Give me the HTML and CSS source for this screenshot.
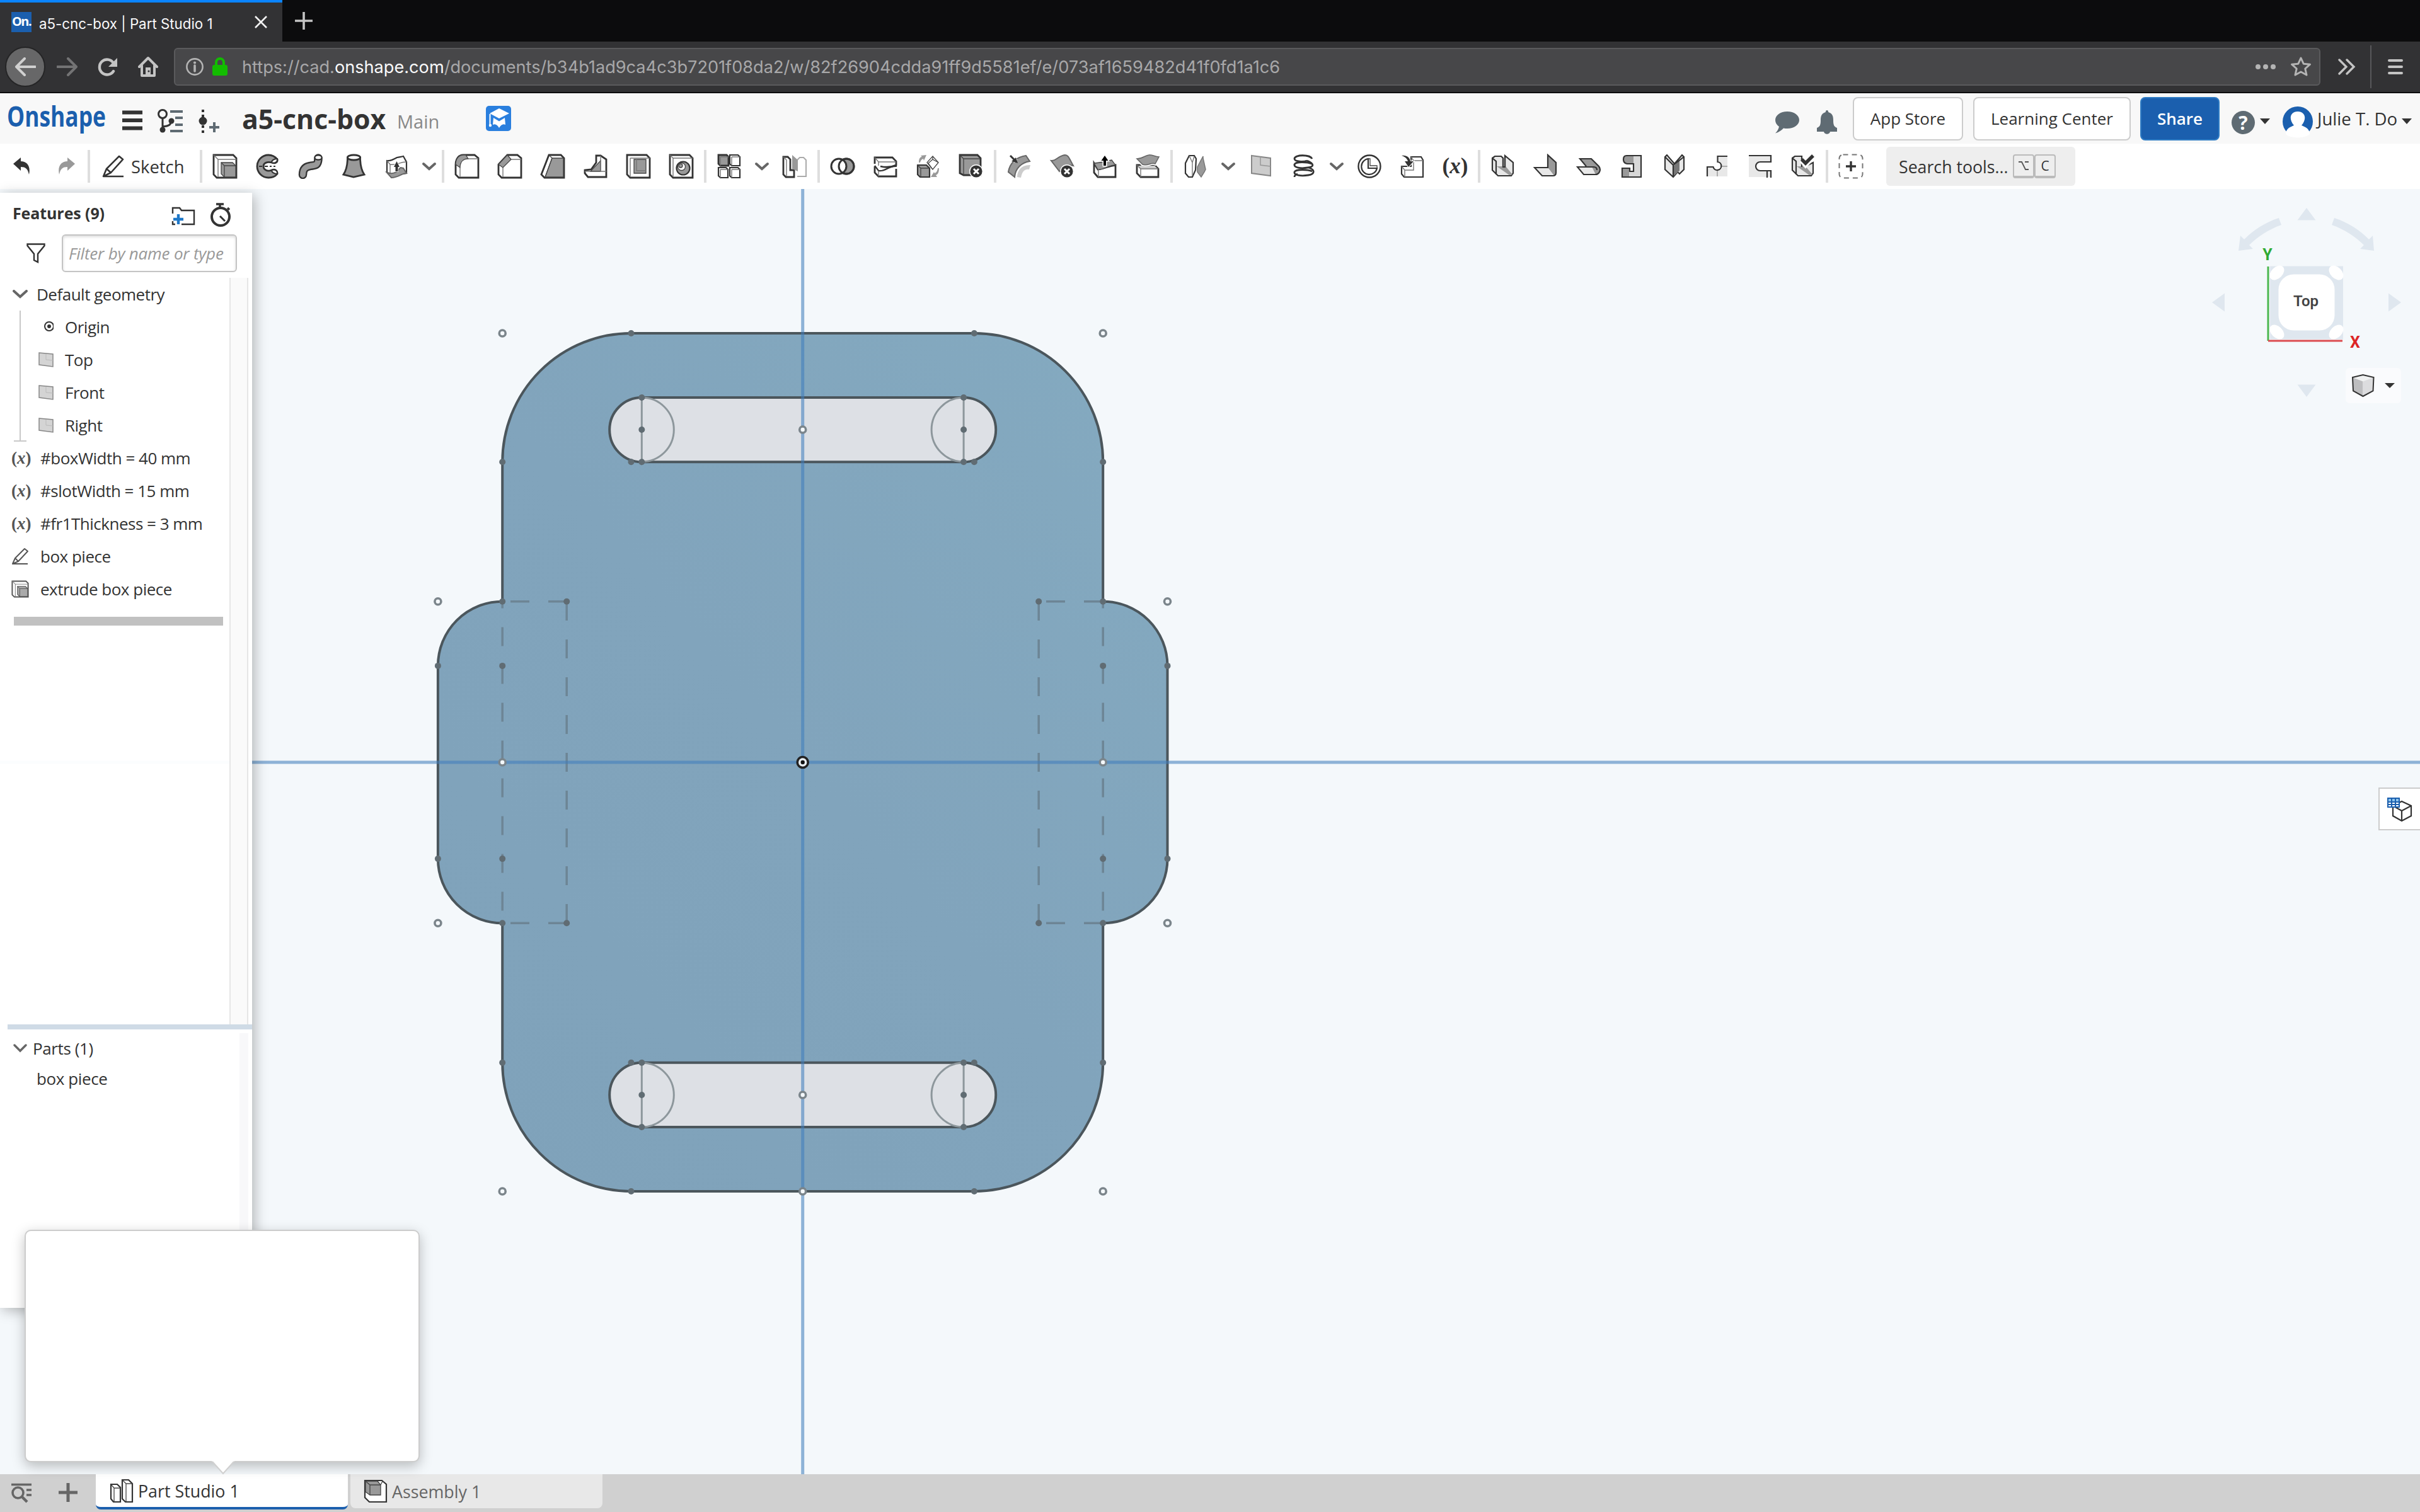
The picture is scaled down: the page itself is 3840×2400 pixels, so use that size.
FILE: index.html
```html
<!DOCTYPE html>
<html lang="en">
<head>
<meta charset="utf-8">
<title>a5-cnc-box | Part Studio 1</title>
<link rel="stylesheet" href="styles.css">
</head>
<body>
<div class="app">
  <div class="tabstrip">
    <div class="browser-tab">
      <span class="favicon">On.</span>
      <span class="browser-tab-title">a5-cnc-box | Part Studio 1</span>
      <svg class="tab-close" viewBox="0 0 20 20"><path d="M1 1L19 19M19 1L1 19" stroke="#f2f2f2" stroke-width="2.6"/></svg>
    </div>
    <svg class="tab-new" viewBox="0 0 28 28"><path d="M14 0V28M0 14H28" stroke="#c4c4c4" stroke-width="3.6"/></svg>
  </div>

  <div class="navbar">
    <span class="nav-back"><svg width="34" height="30" viewBox="0 0 34 30"><path d="M16 2L3 15L16 28M3 15H33" fill="none" stroke="#d0d0d0" stroke-width="4" stroke-linecap="round" stroke-linejoin="round"/></svg></span>
    <svg class="nav-forward" width="34" height="30" viewBox="0 0 34 30"><path d="M18 2L31 15L18 28M31 15H1" fill="none" stroke="#737374" stroke-width="4" stroke-linecap="round" stroke-linejoin="round"/></svg>
    <svg class="nav-reload" width="32" height="30" viewBox="0 0 32 30"><path d="M25 22A12 12 0 1 1 25 9" fill="none" stroke="#c4c4c4" stroke-width="4.4" stroke-linecap="round"/><path d="M31 1V15H17Z" fill="#c4c4c4"/></svg>
    <svg class="nav-home" width="32" height="34" viewBox="0 0 32 34"><path d="M2 17L16 3L30 17M6 15V31H26V15" fill="none" stroke="#c4c4c4" stroke-width="4" stroke-linejoin="round" stroke-linecap="round"/><path d="M12 31V18H20V31Z" fill="#c4c4c4"/><circle cx="17" cy="24" r="1.6" fill="#323234"/></svg>
    <div class="urlbar">
      <svg width="30" height="30" viewBox="0 0 30 30"><circle cx="15" cy="15" r="12.6" fill="none" stroke="#b4b4b4" stroke-width="2.6"/><path d="M15 13V22" stroke="#b4b4b4" stroke-width="3.6" stroke-linecap="round"/><circle cx="15" cy="8.5" r="2.1" fill="#b4b4b4"/></svg>
      <svg class="lock" width="26" height="30" viewBox="0 0 26 30"><path d="M7 14V8A6 6 0 0 1 19 8V14" fill="none" stroke="#12bc00" stroke-width="4"/><rect x="1" y="12" width="24" height="17" rx="3" fill="#12bc00"/></svg>
      <span class="url">https://cad.<b>onshape.com</b>/documents/b34b1ad9ca4c3b7201f08da2/w/82f26904cdda91ff9d5581ef/e/073af1659482d41f0fd1a1c6</span>
      <svg class="url-dots" width="34" height="10" viewBox="0 0 34 10"><g fill="#b4b4b4"><circle cx="5" cy="5" r="4"/><circle cx="17" cy="5" r="4"/><circle cx="29" cy="5" r="4"/></g></svg>
      <svg width="34" height="34" viewBox="0 0 34 34"><path d="M17 3L21.2 12.2L31.5 13.2L23.8 20L26 30L17 25L8 30L10.200 20L2.500 13.200L12.800 12.200Z" fill="none" stroke="#b4b4b4" stroke-width="3" stroke-linejoin="round"/></svg>
    </div>
    <svg class="nav-more" width="28" height="26" viewBox="0 0 28 26"><path d="M2 2L13 13L2 24M14 2L25 13L14 24" fill="none" stroke="#c4c4c4" stroke-width="3.400" stroke-linecap="round"/></svg>
    <span class="nav-divider"></span>
    <svg class="nav-menu" width="24" height="26" viewBox="0 0 24 26"><path d="M2 3H22M2 13H22M2 23H22" stroke="#c4c4c4" stroke-width="4" stroke-linecap="round"/></svg>
  </div>

  <header class="doc-header">
    <svg class="logo" width="160" height="80" viewBox="0 0 160 80"><text x="0" y="53" textLength="157" lengthAdjust="spacingAndGlyphs">Onshape</text></svg>
    <svg class="hamburger" width="32" height="32" viewBox="0 0 32 32"><path d="M0 3.500H32M0 16H32M0 28.500H32" stroke="#333" stroke-width="6"/></svg>
    <svg class="versions" width="42" height="38" viewBox="0 0 42 38"><g fill="none" stroke="#333" stroke-width="3"><circle cx="9" cy="8" r="6.500"/><path d="M9 14V32M9 28C20 27 22 25 23 18"/></g><circle cx="9" cy="33" r="4.500" fill="#333"/><circle cx="23" cy="19" r="4.500" fill="#333"/><path d="M21 4H41M29 14H41M29 25H41M21 35H41" stroke="#5f6b73" stroke-width="4"/></svg>
    <svg class="insert-version" width="34" height="38" viewBox="0 0 34 38"><path d="M8 1V5M8 9V13M8 26V30M8 34V38" stroke="#333" stroke-width="4"/><circle cx="8" cy="19" r="6.500" fill="#333"/><path d="M26 21V37M18 29H34" stroke="#5f6b73" stroke-width="4"/></svg>
    <span class="doc-title">a5-cnc-box</span>
    <span class="doc-branch">Main</span>
    <svg class="learn" width="40" height="40" viewBox="0 0 40 40"><rect width="40" height="40" rx="5" fill="#2a7fde"/><path d="M6 12L21 4L37 12L21 20Z" fill="#fff"/><path d="M12 19L21 24.500L30 19L31 30C27 28 24 30 21 35C18 30 15 28 11 30Z" fill="#fff"/><path d="M6.500 13V33" stroke="#fff" stroke-width="2"/><circle cx="7" cy="31" r="2.200" fill="#fff"/></svg>
    <svg class="chat" width="40" height="36" viewBox="0 0 40 36"><path d="M20 1C31 1 39 7 39 14.500S31 28 20 28C18 28 16 27.800 14 27.400C11 31 6 34 1 35.500C4 33 6 29 7 25C3 22 1 18.500 1 14.500C1 7 9 1 20 1Z" fill="#5f6b73"/></svg>
    <svg class="bell" width="34" height="38" viewBox="0 0 34 38"><path d="M17 0C19 0 19 2 19.200 3C26 5 27 10 27 16C27 23 28 26 33 28V34H22C21 39 13 39 12 34H1V28C6 26 7 23 7 16C7 10 8 5 14.800 3C15 2 15 0 17 0Z" fill="#5f6b73"/></svg>
    <span class="button app-store">App Store</span>
    <span class="button learning">Learning Center</span>
    <span class="button share">Share</span>
    <span class="help">?</span>
    <span class="caret"></span>
    <svg class="avatar" width="48" height="50" viewBox="0 0 48 50"><circle cx="24" cy="24" r="24" fill="#1b5fae"/><path d="M5 44C5 34 14 32 18 30C9 20 12 8 24 8S39 20 30 30C34 32 43 34 43 44C36 51 12 51 5 44Z" fill="#fff"/></svg>
    <span class="user">Julie T. Do</span>
    <span class="caret"></span>
  </header>

  <div class="toolbar">
    <svg class="undo" width="28" height="28" viewBox="0 0 28 28"><path d="M0 10L12 0V6C22 6 28 14 25 27C23 18 20 15 12 15V21Z" fill="#333"/></svg>
    <svg class="redo" width="28" height="28" viewBox="0 0 28 28"><path d="M28 10L16 0V6C6 6 0 14 3 27C5 18 8 15 16 15V21Z" fill="#999"/></svg>
    <i class="sep sep-first"></i>
    <svg class="sketch-icon" width="36" height="36" viewBox="0 0 36 36"><path d="M2 34L7 22L27 2L33 7L14 28ZM7 22L14 28M2 34H34" fill="none" stroke="#333" stroke-width="2.600" stroke-linejoin="round"/></svg>
    <span class="sketch-label">Sketch</span>
    <i class="sep sep-sketch"></i>

    <span class="tool"><svg viewBox="0 0 40 40"><path class="w" d="M2 2H33L38 7V38H7L2 33Z"/><path class="t" d="M2 2L9 9H38M9 9V37"/><path class="g s" d="M14 14H32L37 19V37H19L14 32Z"/><path class="s" d="M14 14L19 19H37M19 19V37"/></svg></span>
    <span class="tool"><svg viewBox="0 0 40 40"><path class="g" d="M35 9C31 4 26 2 21 2A18 18 0 0 0 21 38C27 38 32 36 35 32C35 26 31 24 26 26C19 29 13 25 13 20S19 12 26 14C31 16 36 14 35 9Z"/><path class="w m" d="M35 8C29 8 26 11 26 14C31 16 36 13 35 8ZM35 32C29 32 26 29 26 26C31 24 36 27 35 32Z"/><path class="m" d="M6 20H11M15 20H20M23 20H26M29 20H32"/></svg></span>
    <span class="tool"><svg viewBox="0 0 40 40"><path d="M32 7C32 20 26 18 19 19.500C10 21 7.500 26 7.500 33.500" fill="none" stroke="#333" stroke-width="13.500" stroke-linecap="round"/><path d="M32 7C32 20 26 18 19 19.500C10 21 7.500 26 7.500 33.500" fill="none" stroke="#999" stroke-width="8.800" stroke-linecap="round"/><ellipse class="w m" cx="32" cy="6" rx="5.600" ry="3.600"/></svg></span>
    <span class="tool"><svg viewBox="0 0 40 40"><path class="g" d="M10.500 6C10.500 18 8 27 4 33L20 37L37 33C33 27 30.500 18 30.500 6Z"/><ellipse class="w" cx="20.500" cy="6" rx="10" ry="4"/></svg></span>
    <span class="tool"><svg viewBox="0 0 40 40"><path class="w m" d="M5 11C12 12 17 8 21 6C25 5 28 5 31 4L36 13V31L10 34L5 29Z"/><path class="t" d="M5 11L10 17C20 19 25 13 36 13M10 17V33"/><path d="M5 30C14 33 22 30 26 22L31 23L36 31C28 31 24 38 12 38Z" fill="#999" stroke="#666" stroke-width="2"/><path d="M20.500 12L25 21H22.500V28H18.500V21H16Z" fill="#333" stroke="#fff" stroke-width="1.500" paint-order="stroke"/></svg></span>
    <svg class="chev" viewBox="0 0 36 40"><path d="M9 16L18 24L27 16"/></svg>
    <i class="sep"></i>
    <span class="tool"><svg viewBox="0 0 40 40"><path class="w" d="M14 2H32L38 7V38H7L2 33V17C2 8 7 2 14 2Z"/><path class="g s" d="M14 2H18L22 8C14 8 9 13 9 22L2 17C2 8 7 2 14 2Z"/><path class="t" d="M22 8H38M9 22V37"/></svg></span>
    <span class="tool"><svg viewBox="0 0 40 40"><path class="w" d="M16 2H32L38 7V38H7L2 33V17Z"/><path class="g s" d="M16 2L22 9L9 22L2 17Z"/><path class="t" d="M22 9H38M9 22V37"/></svg></span>
    <span class="tool"><svg viewBox="0 0 40 40"><path class="w" d="M14 2H33L38 7V38H7L2 33Z"/><path class="g s" d="M19 7H37V37H8Z"/><path class="s" d="M14 2L19 7L8 37"/></svg></span>
    <span class="tool"><svg viewBox="0 0 40 40"><path class="w" d="M21 3H28L37 9V37H8L3 31V26L13 25L21 14Z"/><path class="g s" d="M28 11V28H12Z"/><path class="t" d="M28 3V28H37M12 28H3"/></svg></span>
    <span class="tool"><svg viewBox="0 0 40 40"><path class="w" d="M2 2H33L38 7V38H7L2 33Z"/><path class="g s" d="M13 9H32V31H13Z"/><path class="t" d="M7 7H38M7 7V37M17 9V27H32"/></svg></span>
    <span class="tool"><svg viewBox="0 0 40 40"><path class="w" d="M2 2H33L38 7V38H7L2 33Z"/><path class="t" d="M2 2L7 7H38M7 7V37"/><circle class="g m" cx="23" cy="23" r="10.500"/><circle class="w s" cx="20.500" cy="20.500" r="6"/><circle class="g s" cx="19" cy="19" r="3"/></svg></span>
    <i class="sep"></i>
    <span class="tool"><svg viewBox="0 0 40 40"><path class="w m" d="M21 2H34L37 5V19H24L21 16ZM3 22H15L18 25V38H6L3 35ZM21 22H34L37 25V38H24L21 35Z"/><path class="g" d="M3 2H16L19 5V19H6L3 16Z"/><path class="t" d="M6 5H19M6 5V19M24 5H37M24 5V19M6 25H18M6 25V38M24 25H37M24 25V38"/></svg></span>
    <svg class="chev" viewBox="0 0 36 40"><path d="M9 16L18 24L27 16"/></svg>
    <span class="tool"><svg viewBox="0 0 40 40"><path class="w" d="M2 5H9L13 9V26H19V37H6L2 33Z"/><path d="M24 27V10L28 6H34L38 10V36H24" fill="#fff" stroke="#aaa" stroke-width="2"/><path class="t" d="M2 5L7 10V36"/><path d="M16 2L25 10V28L16 24Z" fill="#999"/></svg></span>
    <i class="sep"></i>
    <span class="tool"><svg viewBox="0 0 40 40"><circle class="g" cx="26" cy="20" r="12"/><circle cx="14" cy="20" r="12" fill="#fff"/><circle cx="26" cy="20" r="12" fill="none" stroke="#333" stroke-width="3"/><circle cx="14" cy="20" r="12" fill="none" stroke="#333" stroke-width="3"/></svg></span>
    <span class="tool"><svg viewBox="0 0 40 40"><path class="w" d="M3 16V6H31L37 12V18C28 22 20 22 12 20M3 20V30L9 36H37V24"/><path class="m" d="M3 19L9 27C20 29 24 19 38 20"/><path class="t" d="M3 6L9 13H37M9 13V19M9 27V36"/></svg></span>
    <span class="tool"><svg viewBox="0 0 40 40"><path class="g m" d="M3 18H17L22 23V37H7L3 33Z"/><path class="s" d="M3 18L8 23H22M8 23V37"/><path class="w s" d="M27 4L36 14L27 25L18 14Z"/><path class="s" d="M27 4L27 9L36 14M27 9L20 15L27 25"/><path d="M5 14C5 8 7 5 10 5L8 3L17 2L13 11L12 8C9 9 8 11 7 14ZM37 23C37 30 35 33 32 34L34 37H24L29 29L30 31C34 29 34 27 35 23Z" fill="#999"/></svg></span>
    <span class="tool"><svg viewBox="0 0 40 40"><path class="g" d="M2 2H30L35 7V34H8L2 31Z"/><path class="s" d="M2 2L8 8H35M8 8V34"/><circle cx="28" cy="28" r="11" fill="#fff"/><circle cx="28" cy="28" r="9.600" fill="#333"/><path d="M24 24L32 32M32 24L24 32" stroke="#fff" stroke-width="3"/></svg></span>
    <i class="sep"></i>
    <span class="tool"><svg viewBox="0 0 40 40"><path d="M3 29C5 15 16 5 31 3L37 12C24 14 14 23 13 37Z" fill="#999" stroke="#666" stroke-width="2"/><path d="M17 37C17 26 25 17 38 18L36 25C28 24 25 29 23 38Z" fill="#ccc"/><path d="M6 3L15 12" stroke="#fff" stroke-width="7"/><path d="M6 3L14 11" stroke="#333" stroke-width="3"/><path d="M18 15L8 12L15 6Z" fill="#333"/></svg></span>
    <span class="tool"><svg viewBox="0 0 40 40"><path d="M3 11C11 12 14 3 25 2C30 2 31 6 38 19C27 16 20 22 16 28Z" fill="#999" stroke="#666" stroke-width="2"/><circle cx="28" cy="28" r="11" fill="#fff"/><circle cx="28" cy="28" r="9.600" fill="#333"/><path d="M24 24L32 32M32 24L24 32" stroke="#fff" stroke-width="3"/></svg></span>
    <span class="tool"><svg viewBox="0 0 40 40"><path class="w" d="M3 15L9 25C20 23 26 20 37 18V37H9L3 30Z"/><path class="g s" d="M3 15C10 15 20 12 31 10L37 18C25 18 20 26 9 25Z"/><path class="t" d="M10 25V37"/><path d="M20 3L25.500 11H22V19H18V11H14.500Z" fill="#000" stroke="#fff" stroke-width="3" paint-order="stroke"/></svg></span>
    <span class="tool"><svg viewBox="0 0 40 40"><path class="w" d="M3 18H31L37 24V37H9L3 31Z"/><path d="M4 19H31L36 24H9Z" fill="#ccc"/><path class="t" d="M3 18L9 24H37M9 24V37"/><path d="M3 8C12 8 15 3 22 2C28 1 31 5 38 5L32 16C26 13 20 20 12 17Z" fill="#999" stroke="#fff" stroke-width="5" paint-order="stroke"/><path d="M3 8C12 8 15 3 22 2C28 1 31 5 38 5L32 16C26 13 20 20 12 17Z" fill="#999" stroke="#666" stroke-width="1.500"/></svg></span>
    <i class="sep"></i>
    <span class="tool"><svg viewBox="0 0 40 40"><path class="w m" d="M10 3H18L21 8L20 26L15 37H9L4 31V15Z"/><path class="t" d="M18 4L15 14V35M10 3L15 14"/><path d="M23 21L32 4V7L36 25L34 29L29 37L23 29Z" fill="#999" stroke="#777" stroke-width="1.500"/></svg></span>
    <svg class="chev" viewBox="0 0 36 40"><path d="M9 16L18 24L27 16"/></svg>
    <span class="tool"><svg viewBox="0 0 40 40"><path d="M5 3L35 7V35L5 31Z" fill="#ccc" stroke="#888" stroke-width="2"/><path d="M19 5V18L35 20" fill="none" stroke="#999" stroke-width="1.500"/></svg></span>
    <span class="tool"><svg viewBox="0 0 40 40"><path d="M33 8C30 1 5 1 5 8C5 13 20 13 25 11M25 11C35 15 38 21 26 22C15 24 4 22 5 17C7 12 26 13 32 16M27 22C38 25 38 32 27 34C15 36 4 34 5 29C7 24 27 25 33 28M10 32C7 33 5 35 5 37" fill="none" stroke="#333" stroke-width="2.800"/></svg></span>
    <svg class="chev" viewBox="0 0 36 40"><path d="M9 16L18 24L27 16"/></svg>
    <span class="tool"><svg viewBox="0 0 40 40"><circle cx="20" cy="20" r="17.500" fill="#fff" stroke="#333" stroke-width="2.400"/><path class="m" d="M18 8A12.500 12.500 0 1 0 32 23H18Z"/><path class="s" d="M18 8H21V19H32V23"/></svg></span>
    <span class="tool"><svg viewBox="0 0 40 40"><path class="w m" d="M22 5H34L37 10V37H7L3 32V20H18V5Z"/><path class="t" d="M3 20L8 26H22V11H37M8 26V37M18 5L22 11"/><path d="M3 3C11 2 16 6 17 12H22L14 21L8 12H13C12 8 9 5 3 3Z" fill="#333" stroke="#fff" stroke-width="2" paint-order="stroke"/></svg></span>
    <span class="tool"><span class="var-glyph">(<em>x</em>)</span></span>
    <i class="sep"></i>
    <span class="tool"><svg viewBox="0 0 40 40"><path class="l m" d="M3 7L7 4H17L20 7V21H23V3L36 14V31L33 35H12L3 26Z"/><path d="M10 20H24L35 33L30 34Z" fill="#999"/><path class="m" d="M3 7L9 12V33M20 7V21H23V3"/></svg></span>
    <span class="tool"><svg viewBox="0 0 40 40"><path d="M23 2L36 14V31L33 35L23 22Z" fill="#999"/><path d="M2 22H23L33 35H14Z" fill="#e8e8e8"/><path class="m" d="M2 22H23V2L36 14V30Q36 35 31 35H14Z"/></svg></span>
    <span class="tool"><svg viewBox="0 0 40 40"><path d="M6 8H24L37 21C40 28 34 34 29 34L22 20H16Z" fill="#999"/><path d="M2 21H25L31 33H12Z" fill="#e8e8e8"/><path class="m" d="M16 20L6 8H24L36 20C41 27 35 33 31 33H12L2 21H28Q33 21 33 26"/></svg></span>
    <span class="tool"><svg viewBox="0 0 40 40"><path d="M12 3H35V37H5V23H17V28H23V15H12Q7 14 7 9T12 3Z" fill="#d8d8d8"/><path d="M12 3H23V15H12Q7 14 7 9T12 3ZM5 23H16V37H5Z" fill="#999"/><path class="m" d="M12 3H35V37H5V23H17V28H23V16H13Q7 15 7 9T12 3Z"/></svg></span>
    <span class="tool"><svg viewBox="0 0 40 40"><path class="l m" d="M5 5L8 2L20 16L32 2L35 5V25L28 32L25 29L18 37L5 25Z"/><path d="M19 19L28 11V27L19 35Z" fill="#777"/><path class="m" d="M5 5L18 18L35 5M18 18V36"/></svg></span>
    <span class="tool"><svg viewBox="0 0 40 40"><path d="M20 4H36V36H4V21H14A7 7 0 1 0 20 13Z" fill="#e8e8e8"/><path d="M20 27V36M26 20H36" stroke="#999" stroke-width="1.500"/><path class="m" d="M36 4H20.500V13A6.500 6.500 0 1 1 13.500 21H4V36"/></svg></span>
    <span class="tool"><svg viewBox="0 0 40 40"><path d="M2 3H37V13H20A7 7 0 0 0 20 27H37V37H2Z" fill="#e8e8e8"/><path class="m" d="M2 3H37V13H20A7 7 0 0 0 20 27H37V38M31 28V38"/></svg></span>
    <span class="tool"><svg viewBox="0 0 40 40"><path class="l m" d="M3 7L7 4H18V21H22L36 14V31L33 35H12L3 26Z"/><path d="M10 20H24L35 33L30 34Z" fill="#999"/><path class="m" d="M3 7L9 12V33M18 7V21"/><path d="M18 10L24 17L36 4" fill="none" stroke="#fff" stroke-width="9"/><path d="M18 9L24 15L36 3" fill="none" stroke="#333" stroke-width="5.500"/></svg></span>
    <i class="sep"></i>
    <span class="tool"><svg viewBox="0 0 40 40"><rect x="1.500" y="1.500" width="37" height="37" rx="6" fill="none" stroke="#777" stroke-width="2" stroke-dasharray="8 6"/><path d="M20 12V28M12 20H28" stroke="#333" stroke-width="3.400"/></svg></span>
    <div class="search"><span class="search-label">Search tools...</span><kbd><svg width="18" height="16" viewBox="0 0 18 16"><path d="M1 2H6L12 14H17M11 2H17" fill="none" stroke="#555" stroke-width="1.800"/></svg></kbd><kbd>C</kbd></div>
  </div>

  <main class="workspace">
    <svg class="model" viewBox="0 300 3840 2040">
      <defs><linearGradient id="face" x1="0" y1="1" x2="1" y2="0"><stop offset="0" stop-color="#7fa2ba"/><stop offset=".5" stop-color="#81a4bc"/><stop offset="1" stop-color="#84aac0"/></linearGradient></defs>
      <path id="body" d="M1001.500 529H1545.900A204.300 204.300 0 0 1 1750.200 733.300V954.700A102.200 102.200 0 0 1 1852.500 1056.900V1363.100A102.200 102.200 0 0 1 1750.200 1465.300V1686.700A204.300 204.300 0 0 1 1545.900 1891H1001.500A204.300 204.300 0 0 1 797.200 1686.700V1465.300A102.200 102.200 0 0 1 694.900 1363.100V1056.900A102.200 102.200 0 0 1 797.200 954.700V733.300A204.300 204.300 0 0 1 1001.500 529Z" fill="url(#face)" stroke="#4b565c" stroke-width="4"/>
      <g fill="#dde0e5" stroke="#4b565c" stroke-width="4"><rect x="967.200" y="631" width="613" height="102.300" rx="51.100"/><rect x="967.200" y="1686.700" width="613" height="102.300" rx="51.100"/></g>
      <g fill="none" stroke="#8d979c" stroke-width="3">
        <path d="M1018.300 631V733A51 51 0 0 0 1018.300 631M1529.100 631V733A51 51 0 0 1 1529.100 631M1018.300 1687V1789A51 51 0 0 0 1018.300 1687M1529.100 1687V1789A51 51 0 0 1 1529.100 1687"/>
      </g>
      <g stroke="#6d8595" stroke-width="3.500" fill="none">
        <path d="M899.200 955V1465M1648.200 955V1465" stroke-dasharray="30 30"/>
        <path d="M797.200 955V1465M1750.200 955V1465" stroke-dasharray="30 30" stroke-dashoffset="19.500"/>
        <path d="M810 954.700H840M870 954.700H899M1660 954.700H1690M1720 954.700H1750M810 1465.300H840M870 1465.300H899M1660 1465.300H1690M1720 1465.300H1750"/>
      </g>
      <path d="M1273.700 300V2340M0 1210H3840" stroke="#3f7cbd" stroke-opacity=".57" stroke-width="5"/>
      <g fill="#606c73">
        <circle cx="1001.500" cy="529" r="5"/><circle cx="1545.900" cy="529" r="5"/><circle cx="797.200" cy="733.300" r="5"/><circle cx="1750.200" cy="733.300" r="5"/>
        <circle cx="1001.500" cy="1891" r="5"/><circle cx="1545.900" cy="1891" r="5"/><circle cx="797.200" cy="1686.700" r="5"/><circle cx="1750.200" cy="1686.700" r="5"/>
        <circle cx="1018.300" cy="631" r="5"/><circle cx="1529.100" cy="631" r="5"/><circle cx="1018.300" cy="682" r="5"/><circle cx="1529.100" cy="682" r="5"/><circle cx="1018.300" cy="733.300" r="5"/><circle cx="1529.100" cy="733.300" r="5"/><circle cx="1001.500" cy="733.300" r="5"/><circle cx="1545.900" cy="733.300" r="5"/>
        <circle cx="1018.300" cy="1686.700" r="5"/><circle cx="1529.100" cy="1686.700" r="5"/><circle cx="1018.300" cy="1738" r="5"/><circle cx="1529.100" cy="1738" r="5"/><circle cx="1018.300" cy="1789" r="5"/><circle cx="1529.100" cy="1789" r="5"/><circle cx="1001.500" cy="1686.700" r="5"/><circle cx="1545.900" cy="1686.700" r="5"/>
        <circle cx="797.200" cy="954.700" r="5"/><circle cx="899.200" cy="954.700" r="5"/><circle cx="1648.200" cy="954.700" r="5"/><circle cx="1750.200" cy="954.700" r="5"/>
        <circle cx="797.200" cy="1465.300" r="5"/><circle cx="899.200" cy="1465.300" r="5"/><circle cx="1648.200" cy="1465.300" r="5"/><circle cx="1750.200" cy="1465.300" r="5"/>
        <circle cx="694.900" cy="1056.900" r="5"/><circle cx="797.200" cy="1056.900" r="5"/><circle cx="1750.200" cy="1056.900" r="5"/><circle cx="1852.500" cy="1056.900" r="5"/>
        <circle cx="694.900" cy="1363.100" r="5"/><circle cx="797.200" cy="1363.100" r="5"/><circle cx="1750.200" cy="1363.100" r="5"/><circle cx="1852.500" cy="1363.100" r="5"/>
      </g>
      <g fill="#f4f8fb" stroke="#7b858b" stroke-width="3.600">
        <circle cx="797.200" cy="529" r="5"/><circle cx="1750.200" cy="529" r="5"/><circle cx="797.200" cy="1891" r="5"/><circle cx="1750.200" cy="1891" r="5"/>
        <circle cx="694.900" cy="954.700" r="5"/><circle cx="1852.500" cy="954.700" r="5"/><circle cx="694.900" cy="1465.300" r="5"/><circle cx="1852.500" cy="1465.300" r="5"/>
        <circle cx="797.200" cy="1210" r="5"/><circle cx="1750.200" cy="1210" r="5"/><circle cx="1273.700" cy="682" r="5"/><circle cx="1273.700" cy="1738" r="5"/><circle cx="1273.700" cy="1891" r="5"/>
      </g>
      <circle cx="1273.700" cy="1210" r="8.500" fill="#e8eef2" stroke="#222" stroke-width="3.600"/><circle cx="1273.700" cy="1210" r="3.200" fill="#111"/>
    </svg>

    <svg class="viewcube" viewBox="0 0 380 360">
      <g fill="#dfe7ef">
        <path d="M200 30L214.500 49.500H185.500ZM200 330L214.500 310.500H185.500ZM50 180L70 165.500V194.500ZM350 180L330 165.500V194.500Z"/>
        <path d="M156 46L160 57C140 64 122 76 109 89L115 95L92 98L95 74L101 80C116 65 134 53 156 46ZM244 46L240 57C260 64 278 76 291 89L285 95L307 98L305 74L299 80C284 65 266 53 244 46Z"/>
        <rect x="142" y="122.500" width="116" height="116"/>
      </g>
      <g fill="#fff"><ellipse cx="153" cy="133" rx="13.500" ry="9" transform="rotate(-45 153 133)"/><ellipse cx="247" cy="133" rx="13.500" ry="9" transform="rotate(45 247 133)"/><ellipse cx="153" cy="227" rx="13.500" ry="9" transform="rotate(45 153 227)"/><ellipse cx="247" cy="227" rx="13.500" ry="9" transform="rotate(-45 247 227)"/><rect x="155.500" y="135.500" width="89" height="89" rx="24"/></g>
      <path d="M139 123V241" stroke="#4bb84f" stroke-width="3"/><path d="M139 241H257" stroke="#dc4c50" stroke-width="3"/>
      <text x="138" y="112.500" text-anchor="middle" fill="#2fab33" class="axis">Y</text><text x="277" y="251.500" text-anchor="middle" fill="#dc2626" class="axis">X</text>
      <text x="199" y="186" text-anchor="middle" fill="#444" class="face-name">Top</text>
      <rect x="262" y="284" width="88" height="56" rx="6" fill="#fafbfd"/>
      <path d="M273 299L289.500 305V329L274 320.500Z" fill="#bdbdbf"/><path d="M306 299L289.500 305V329L305.500 320.500Z" fill="#dcdcde"/><path d="M273 299L289.500 295L306 299L289.500 305.500Z" fill="#f0f1f1"/>
      <path d="M273 299L289.500 295L306.500 299L305.500 320.500L289.500 329L274 320.500Z" fill="none" stroke="#333" stroke-width="2"/>
      <path d="M324 308H340L332 316Z" fill="#333"/>
    </svg>

    <aside class="panel">
      <section class="features">
        <div class="features-head">
          <h2>Features (9)</h2>
          <svg class="add-folder" width="38" height="32" viewBox="0 0 38 32"><path d="M2 12V3H13L16 7H36V29H16M2 24V29H6" fill="none" stroke="#333" stroke-width="2.400"/><path d="M11 13V29M3 21H19" stroke="#1f78c8" stroke-width="4.400"/></svg>
          <svg class="stopwatch" width="34" height="38" viewBox="0 0 34 38"><circle cx="17" cy="22" r="14" fill="none" stroke="#333" stroke-width="4"/><path d="M10 2H22M16 2V8M28 8L31 11" stroke="#333" stroke-width="3.400"/><path d="M16 21L24 29" stroke="#333" stroke-width="3"/></svg>
        </div>
        <div class="filter-row">
          <svg width="30" height="32" viewBox="0 0 30 32"><path d="M1.500 1.500H28.500V4L18 17V30L12 27V17L1.500 4Z" fill="none" stroke="#333" stroke-width="2.400"/></svg>
          <div class="filter-input">Filter by name or type</div>
        </div>
        <div class="feature-area">
          <ul class="feature-list">
            <li class="folder"><svg class="twisty" width="24" height="14" viewBox="0 0 24 14"><path d="M2 2L12 11L22 2" fill="none" stroke="#666" stroke-width="4" stroke-linecap="round"/></svg>Default geometry</li>
            <li class="child"><svg width="24" height="24" viewBox="0 0 24 24"><circle cx="17" cy="11" r="7" fill="none" stroke="#333" stroke-width="2"/><circle cx="17" cy="11" r="3" fill="#333"/></svg>Origin</li>
            <li class="child"><svg width="24" height="24" viewBox="0 0 24 24"><path d="M1 1L23 3V23L1 20Z" fill="#d4d4d4" stroke="#888" stroke-width="1.500"/><path d="M12 3V12L23 13" fill="none" stroke="#bbb"/></svg>Top</li>
            <li class="child"><svg width="24" height="24" viewBox="0 0 24 24"><path d="M1 1L23 3V23L1 20Z" fill="#d4d4d4" stroke="#888" stroke-width="1.500"/><path d="M12 3V12L23 13" fill="none" stroke="#bbb"/></svg>Front</li>
            <li class="child"><svg width="24" height="24" viewBox="0 0 24 24"><path d="M1 1L23 3V23L1 20Z" fill="#d4d4d4" stroke="#888" stroke-width="1.500"/><path d="M12 3V12L23 13" fill="none" stroke="#bbb"/></svg>Right</li>
            <li><span class="var-small">(<em>x</em>)</span>#boxWidth = 40 mm</li>
            <li><span class="var-small">(<em>x</em>)</span>#slotWidth = 15 mm</li>
            <li><span class="var-small">(<em>x</em>)</span>#fr1Thickness = 3 mm</li>
            <li><svg class="lead" width="28" height="28" viewBox="0 0 28 28"><path d="M2 26L6 17L21 2L26 6L11 22ZM6 17L11 22M2 26H26" fill="none" stroke="#555" stroke-width="2" stroke-linejoin="round"/></svg>box piece</li>
            <li><svg class="lead" width="28" height="28" viewBox="0 0 40 40"><path d="M2 2H33L38 7V38H7L2 33Z" fill="#fff" stroke="#555" stroke-width="2.800"/><path d="M2 2L9 9H38M9 9V37" fill="none" stroke="#888" stroke-width="1.600"/><path d="M14 14H32L37 19V37H19L14 32Z" fill="#aaa" stroke="#555" stroke-width="1.600"/><path d="M14 14L19 19H37M19 19V37" fill="none" stroke="#555" stroke-width="1.400"/></svg>extrude box piece</li>
            <li class="rollback"></li>
          </ul>
          <div class="track"></div>
        </div>
      </section>
      <div class="splitter"></div>
      <section class="parts">
        <ul class="parts-list">
          <li><svg class="twisty" width="22" height="14" viewBox="0 0 22 14"><path d="M2 2L11 11L20 2" fill="none" stroke="#666" stroke-width="3.400" stroke-linecap="round"/></svg>Parts (1)</li>
          <li class="part">box piece</li>
        </ul>
        <div class="track track-parts"></div>
      </section>
    </aside>

    <div class="config-button"><svg width="40" height="36" viewBox="0 0 40 36"><path d="M9 11L23 4L38 11V27L23 35L9 27ZM9 11L23 19L38 11M23 19V35" fill="none" stroke="#333" stroke-width="2.200"/><rect x="0" y="-2" width="20" height="16" fill="#1b5fae"/><path d="M2 4H6V0H2ZM8 4H12V0H8ZM14 4H18V0H14Z" fill="#8cc4ee"/><path d="M2 7H6M8 7H12M14 7H18M2 11H6M8 11H12M14 11H18" stroke="#fff" stroke-width="2"/></svg></div>

    <div class="preview"><svg class="preview-arrow" width="36" height="22" viewBox="0 0 36 22"><path d="M0 0H36L18 20Z" fill="#fff"/><path d="M1 1L18 20L35 1" fill="none" stroke="#d0d0d0" stroke-width="2"/></svg></div>
  </main>

  <footer class="tabbar">
    <svg class="tab-search" width="34" height="32" viewBox="0 0 34 32"><path d="M1 2.500H33M25 11H33M25 19H33" stroke="#666" stroke-width="3.600"/><circle cx="11.500" cy="15.500" r="8.500" fill="none" stroke="#666" stroke-width="3.600"/><path d="M17 21L26 30" stroke="#666" stroke-width="4.400"/></svg>
    <svg class="tab-add" width="30" height="30" viewBox="0 0 30 30"><path d="M15 0V30M0 15H30" stroke="#666" stroke-width="5"/></svg>
    <div class="doc-tab active"><svg width="40" height="40" viewBox="0 0 40 40"><path class="w m" d="M3 10H13L18 15V38H7L3 33ZM21 3H31L37 9V38H26L21 33Z"/><path class="s" d="M3 10L8 16H18M8 16V37M21 3L27 9H37M27 9V37"/></svg>Part Studio 1</div>
    <div class="doc-tab"><svg width="40" height="40" viewBox="0 0 40 40"><path class="w m" d="M3 3H30L37 9V37H10L3 30Z"/><path class="g s" d="M4 4H23L28 10V26H11L4 21Z"/><path class="s" d="M4 4L11 10H28M11 10V26M28 10L31 4"/></svg>Assembly 1</div>
  </footer>
</div>
</body>
</html>
```
FILE: styles.css
```css
* { box-sizing: border-box; }
body { margin: 0; width: 3840px; height: 2400px; overflow: hidden; font-family: "Open Sans", "Noto Sans", sans-serif; font-size: 26px; color: #333; background: #f4f8fb; }
ul { list-style: none; margin: 0; padding: 0; }
svg { display: block; flex: none; }
.app { display: flex; flex-direction: column; height: 2400px; white-space: nowrap; }

/* Browser chrome */
.tabstrip { display: flex; height: 66px; background: #0c0c0d; align-items: center; font-family: Inter, sans-serif; }
.browser-tab { display: flex; align-items: center; width: 448px; height: 66px; padding: 4px 0 0 18px; background: #323234; border-top: 4px solid #0a84ff; }
.favicon { width: 32px; height: 32px; background: #1b5fae; color: #fff; font: bold 20px/30px "Open Sans", sans-serif; letter-spacing: -1.6px; text-align: center; margin-top: -4px; }
.browser-tab-title { margin-left: 12px; width: 342px; font-size: 22.3px; color: #f9f9fa; }
.tab-close { width: 20px; height: 20px; margin-top: -4px; }
.tab-new { width: 28px; height: 28px; margin-left: 20px; }
.navbar { display: flex; align-items: center; height: 82px; background: #323234; border-bottom: 2px solid #0c0c0d; }
.nav-back { display: flex; align-items: center; justify-content: center; width: 64px; height: 64px; margin-left: 8px; border-radius: 50%; background: #676768; border: 2px solid #252526; }
.nav-forward { margin-left: 18px; }
.nav-reload { margin-left: 31px; }
.nav-home { margin-left: 32px; }
.urlbar { display: flex; align-items: center; width: 3406px; height: 60px; margin-left: 25px; padding-left: 16px; padding-right: 12px; background: #474749; border: 2px solid #5a5a5c; border-radius: 6px; }
.lock { margin-left: 12px; }
.url { margin-left: 22px; flex: 1; font: 27.15px Inter, sans-serif; color: #a8a8a9; }
.url b { font-weight: 400; color: #f9f9fa; }
.url-dots { margin-right: 22px; }
.nav-more { margin-left: 28px; }
.nav-divider { width: 2px; height: 68px; margin-left: 23px; background: #57575a; }
.nav-menu { margin-left: 26px; }

/* Document header */
.doc-header { display: flex; align-items: center; height: 80px; background: #f8f8f8; padding-left: 11px; }
.logo { overflow: visible; }
.logo text { font: bold 44px "Open Sans", sans-serif; fill: #1b5fae; }
.hamburger { margin-left: 23px; margin-top: 6px; }
.versions { margin-left: 23px; margin-top: 8px; }
.insert-version { margin-left: 23px; margin-top: 8px; }
.doc-title { width: 246px; margin-left: 36px; font-size: 42.8px; font-weight: 700; }
.doc-branch { width: 141px; font-size: 29px; color: #888; margin-top: 8px; }
.learn { margin-right: 2005px; }
.chat { margin-top: 12px; }
.bell { margin-left: 26px; margin-top: 12px; }
.button { display: flex; align-items: center; justify-content: center; height: 69px; border: 2px solid #ccc; border-radius: 8px; background: #fff; }
.app-store { width: 175px; margin-left: 24px; }
.learning { width: 250px; margin-left: 16px; }
.share { width: 126px; margin-left: 15px; background: #1b5fae; border-color: #2f7cc4; color: #fff; font-weight: 600; }
.help { width: 37px; height: 37px; margin: 12px 8px 0 19px; border-radius: 50%; background: #5f6b73; color: #fff; font: bold 30px/37px "Open Sans", sans-serif; text-align: center; }
.caret { margin-top: 8px; border: 8px solid transparent; border-top: 9px solid #333; border-bottom: 0; }
.avatar { margin-left: 20px; margin-top: 12px; }
.user { width: 134px; margin-left: 7px; font-size: 27.6px; }

/* Feature toolbar */
.toolbar { display: flex; align-items: center; height: 72px; background: #fff; padding-left: 21px; }
.redo { margin-left: 42px; }
.sep { flex: none; width: 4px; height: 52px; margin: 0 2px; background: #dedede; }
.sep-first { margin-left: 20px; }
.sketch-icon { margin-left: 17px; }
.sketch-label { width: 107px; margin-left: 10px; font-size: 27.4px; }
.tool { flex: none; display: flex; align-items: center; justify-content: center; width: 68px; height: 72px; }
.tool svg { width: 40px; height: 40px; }
.chev { width: 36px; height: 40px; }
.chev path { fill: none; stroke: #666; stroke-width: 4; stroke-linecap: round; }
.w, .g, .l { stroke: #333; stroke-width: 2.8; }
.w { fill: #fff; }
.g { fill: #999; }
.l { fill: #e8e8e8; }
.m { stroke: #333; stroke-width: 2.2; }
.s { stroke: #444; stroke-width: 1.3; }
.t { stroke: #777; stroke-width: 1.4; fill: none; }
path.m:not(.w):not(.g):not(.l), path.s:not(.w):not(.g):not(.l) { fill: none; }
.var-glyph { font: bold 35px/40px "Liberation Serif", serif; }
.search { display: flex; align-items: center; width: 300px; height: 62px; margin-left: 22px; padding-left: 20px; border-radius: 6px; background: #eee; }
.search-label { width: 181px; font-size: 26.7px; }
kbd { display: flex; align-items: center; justify-content: center; width: 34px; height: 38px; border: 2px solid #bbb; border-bottom-width: 4px; border-radius: 4px; font: 21px "Open Sans", sans-serif; }

/* Model view */
.workspace { position: relative; height: 2040px; background: #f4f8fb; }
.model { width: 3840px; height: 2040px; }
.viewcube { position: absolute; left: 3460px; top: 0; width: 380px; height: 360px; }
.axis { font: bold 25px Roboto, sans-serif; }
.face-name { font: 600 24px Roboto, sans-serif; }
.config-button { position: absolute; right: 0; top: 950px; width: 66px; height: 68px; border: 2px solid #ccc; border-right: 0; background: #fff; padding: 16px 0 0 12px; }
.config-button svg { overflow: visible; }

/* Feature list */
.panel { position: absolute; left: 0; top: 6px; width: 400px; height: 1770px; display: flex; flex-direction: column; background: rgba(255, 255, 255, .97); box-shadow: 4px 4px 20px rgba(0, 0, 0, .28); }
.features { height: 1320px; display: flex; flex-direction: column; }
.features-head { display: flex; align-items: center; height: 66px; padding-left: 20px; }
.features-head h2 { width: 252px; margin: -3px 0 0; font-size: 25px; font-weight: 700; letter-spacing: -.1px; }
.add-folder { margin-top: 7px; }
.stopwatch { margin-left: 23px; margin-top: 4px; }
.filter-row { display: flex; align-items: center; height: 60px; padding-left: 42px; }
.filter-input { width: 278px; height: 60px; margin-left: 26px; padding-left: 9px; border: 2px solid #c4c4c4; border-radius: 6px; background: #fff; box-shadow: inset 0 2px 4px rgba(0, 0, 0, .15); font-style: italic; line-height: 57px; letter-spacing: -.2px; color: #999; }
.feature-area { flex: 1; display: flex; justify-content: space-between; padding: 9px 6px 0 0; }
.feature-list { position: relative; width: 358px; letter-spacing: -.5px; }
.feature-list::before { content: ""; position: absolute; left: 31px; top: 52px; width: 2px; height: 207px; background: #c8c8c8; }
.feature-list::after { content: ""; position: absolute; left: 22px; top: 258px; width: 20px; height: 2px; background: #c8c8c8; }
.feature-list li { display: flex; align-items: center; height: 52px; padding-left: 18px; }
.feature-list .folder { padding-left: 20px; gap: 14px; }
.feature-list .child { padding-left: 61px; gap: 18px; }
.lead { margin-right: 18px; }
.var-small { width: 46px; font: bold 27px/30px "Liberation Serif", serif; letter-spacing: 0; color: #555; }
.feature-list .rollback { height: 14px; width: 332px; margin: 18px 0 0 22px; padding: 0; background: #c1c1c1; }
.track { width: 30px; background: #fafafa; border-left: 2px solid #e6e6e6; border-right: 2px solid #e6e6e6; }
.splitter { height: 8px; margin-left: 12px; background: #cfdbe6; }
.parts { flex: 1; display: flex; justify-content: space-between; padding: 6px 6px 0 0; }
.parts-list { letter-spacing: -.4px; }
.parts-list li { display: flex; align-items: center; height: 48px; padding-left: 21px; gap: 9px; }
.parts-list .part { padding-left: 58px; }
.track-parts { width: 14px; border: 0; background: #f8f8fa; }

.preview { position: absolute; left: 39px; top: 1652px; width: 627px; height: 369px; border: 2px solid #ccc; border-radius: 10px; background: #fff; box-shadow: 0 6px 20px rgba(0, 0, 0, .25); }
.preview-arrow { position: absolute; left: 295px; top: 365px; }

/* Document tabs */
.tabbar { display: flex; height: 60px; background: #d0d0d0; padding-left: 17px; }
.tab-search { margin-top: 14px; }
.tab-add { margin: 14px 29px 0 42px; }
.doc-tab { display: flex; align-items: center; gap: 6px; width: 400px; height: 54px; padding-left: 20px; margin-right: 4px; border-radius: 0 0 8px 8px; background: #e8e8e8; color: #666; font-size: 26.8px; }
.doc-tab.active { height: 56px; padding-left: 21px; border-bottom: 4px solid #1b5fae; background: #fff; color: #333; }
```
